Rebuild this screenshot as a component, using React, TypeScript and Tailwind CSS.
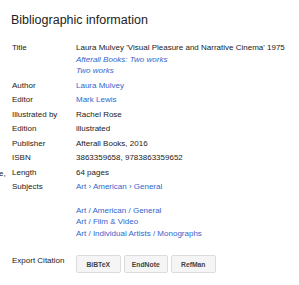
export default function App() {
  const font = { fontFamily: '"Liberation Sans", Arial, Helvetica, sans-serif' };
  const link = "text-[#3366cc]";
  const rows: { label: string; value: React.ReactNode }[] = [
    {
      label: "Title",
      value: (
        <>
          <div>Laura Mulvey 'Visual Pleasure and Narrative Cinema' 1975</div>
          <div className={`${link} italic`}>Afterall Books: Two works</div>
          <div className={`${link} italic`}>Two works</div>
        </>
      ),
    },
    { label: "Author", value: <span className={link}>Laura Mulvey</span> },
    { label: "Editor", value: <span className={link}>Mark Lewis</span> },
    { label: "Illustrated by", value: "Rachel Rose" },
    { label: "Edition", value: "illustrated" },
    { label: "Publisher", value: "Afterall Books, 2016" },
    { label: "ISBN", value: "3863359658, 9783863359652" },
    { label: "Length", value: "64 pages" },
    {
      label: "Subjects",
      value: (
        <>
          <div className={link}>Art › American › General</div>
          <div>&nbsp;</div>
          <div className={link}>Art / American / General</div>
          <div className={link}>Art / Film &amp; Video</div>
          <div className={link}>Art / Individual Artists / Monographs</div>
        </>
      ),
    },
  ];
  return (
    <div className="relative w-[299px] h-[285px] bg-white overflow-hidden text-[#222]" style={font}>
      <div className="pl-[10px] pt-[13px]">
        <div className="text-[12.5px] leading-[15px] pl-[1px]">Bibliographic information</div>
        <div className="pt-[12.5px] pl-[2px] text-[8px] leading-[11.7px]">
          {rows.map((r) => (
            <div key={r.label} className="flex py-[1.4px]">
              <div className="w-[64px] shrink-0">{r.label}</div>
              <div className="whitespace-nowrap">{r.value}</div>
            </div>
          ))}
          <div className="flex items-start pt-[13.5px]">
            <div className="w-[64px] shrink-0">Export Citation</div>
            <div className="flex gap-[3px]">
              {["BiBTeX", "EndNote", "RefMan"].map((b) => (
                <div
                  key={b}
                  className="w-[44.5px] h-[18px] flex items-center justify-center bg-[#f5f5f5] border border-[#dcdcdc] rounded-[2px] text-[6.8px] font-bold text-[#444] pt-[2px]"
                >
                  {b}
                </div>
              ))}
            </div>
          </div>
        </div>
      </div>
      <div className="absolute left-[-1px] top-[168px] text-[8px] leading-[11.7px]">e,</div>
    </div>
  );
}
